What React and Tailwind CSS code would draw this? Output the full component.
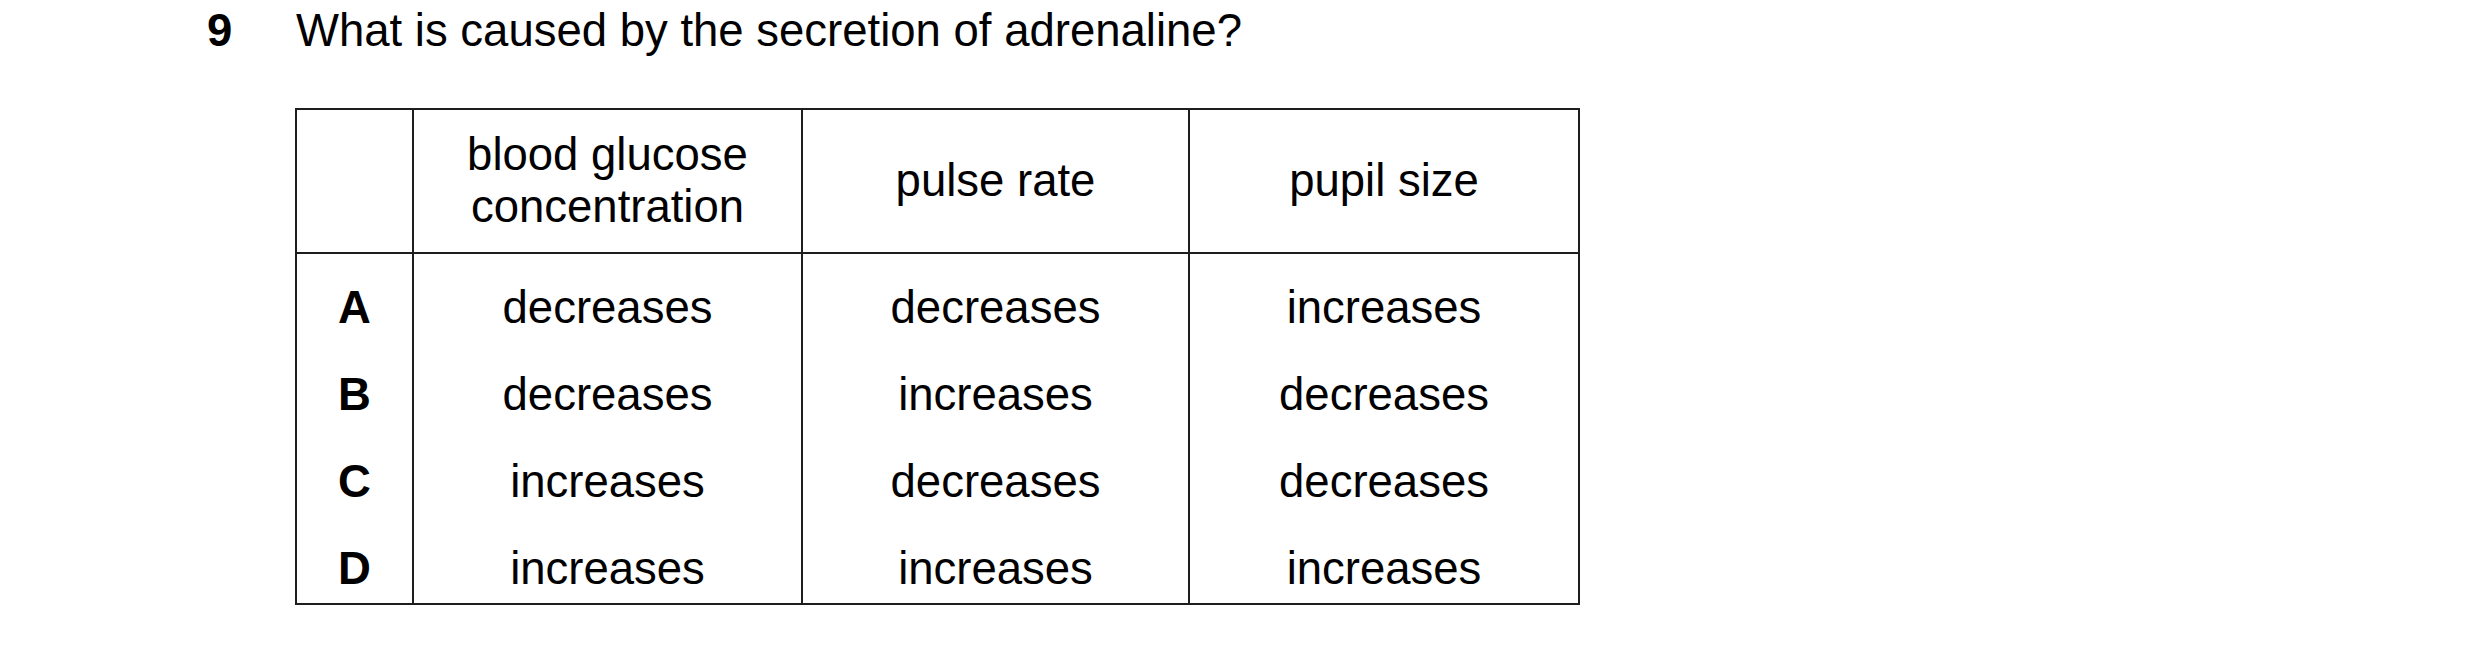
const headers = [
  ['blood glucose', 'concentration'],
  ['pulse rate'],
  ['pupil size'],
]

const rows = [
  ['A', 'decreases', 'decreases', 'increases'],
  ['B', 'decreases', 'increases', 'decreases'],
  ['C', 'increases', 'decreases', 'decreases'],
  ['D', 'increases', 'increases', 'increases'],
]

const colClass = 'grid grid-cols-[117px_389px_387px_388px]'

export default function App() {
  return (
    <div className="w-[2480px] h-[646px] bg-white text-black text-[45.5px] leading-[52px] font-['Liberation_Sans',Arial,sans-serif]">
      {/* question line */}
      <div className="flex pt-[5px]">
        <span className="w-[296px] pl-[207px] font-bold">9</span>
        <span>What is caused by the secretion of adrenaline?</span>
      </div>

      {/* answer table */}
      <div className="ml-[295px] mt-[51px] w-[1285px] border-2 border-[#1e1e1e]">
        <div className={`${colClass} h-[144px] border-b-2 border-[#1e1e1e]`}>
          <div className="border-r-2 border-[#1e1e1e]" />
          {headers.map((lines, i) => (
            <div
              key={i}
              className={`flex flex-col items-center justify-center text-center ${i < 2 ? 'border-r-2 border-[#1e1e1e]' : ''}`}
            >
              {lines.map(l => (
                <span key={l}>{l}</span>
              ))}
            </div>
          ))}
        </div>

        <div className={colClass}>
          {[0, 1, 2, 3].map(c => (
            <div
              key={c}
              className={`flex flex-col items-center gap-[35px] pt-[28px] pb-[8px] ${c < 3 ? 'border-r-2 border-[#1e1e1e]' : ''}`}
            >
              {rows.map(r => (
                <span key={r[0]} className={c === 0 ? 'font-bold' : ''}>
                  {r[c]}
                </span>
              ))}
            </div>
          ))}
        </div>
      </div>
    </div>
  )
}
